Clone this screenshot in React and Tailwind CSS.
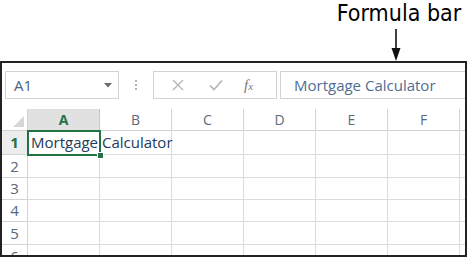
const COLS = ['A', 'B', 'C', 'D', 'E', 'F']
const ROWS = [1, 2, 3, 4, 5, 6]

// Cell value shown in A1 and in the formula bar
const VALUE = 'Mortgage Calculator'

function Corner() {
  return (
    <div className="relative border-r border-b border-[#d4d4d4] bg-white">
      <svg className="absolute right-[3px] bottom-[3px]" width="11" height="11" viewBox="0 0 11 11">
        <polygon points="11,0 11,11 0,11" fill="#d6d6d6" />
      </svg>
    </div>
  )
}

function ColHeader({ label }) {
  const active = label === 'A'
  return (
    <div
      className={
        'flex items-center justify-center border-r border-b text-[14px] ' +
        (active
          ? 'border-b-[#217346] border-r-[#c6c6c6] bg-[#e1e1e1] font-bold text-[#217346]'
          : 'border-[#d4d4d4] bg-white text-[#5c6b7c]')
      }
    >
      {label}
    </div>
  )
}

function RowHeader({ n }) {
  const active = n === 1
  return (
    <div
      className={
        'flex items-center justify-center border-r border-b text-[15px] ' +
        (active
          ? 'border-r-[#217346] border-b-[#d4d4d4] bg-[#ededed] font-bold text-[#217346]'
          : 'border-[#d4d4d4] bg-white text-[#55687e]')
      }
    >
      {n}
    </div>
  )
}

export default function App() {
  return (
    <div className="h-[257px] w-[468px] overflow-hidden bg-white font-['Liberation_Sans',Arial,sans-serif]">
      {/* label + arrow */}
      <div className="flex h-[61px] pl-[337px]">
        <div className="flex w-[124px] flex-col items-center pt-[1px]">
          <span className="whitespace-nowrap font-['DejaVu_Sans_Condensed','DejaVu_Sans',sans-serif] text-[23px] leading-[25px] font-stretch-condensed text-black">
            Formula bar
          </span>
          <svg className="mr-[6px] mt-[3px]" width="10" height="32" viewBox="0 0 10 32">
            <line x1="5" y1="0" x2="5" y2="22" stroke="#111" strokeWidth="1.6" />
            <polygon points="0.5,19 9.5,19 5,32" fill="#111" />
          </svg>
        </div>
      </div>

      {/* screenshot frame */}
      <div className="h-[196px] w-[467px] overflow-hidden border-2 border-[#232323] bg-white font-['Open_Sans',Lato,sans-serif]">
        {/* toolbar */}
        <div className="flex items-center pt-[8px]">
          <div className="ml-[3px] flex h-[28px] w-[114px] items-center justify-between border border-[#d3d3d3] pl-[8px] pr-[6px]">
            <span className="text-[15px] text-[#4d6280]">A1</span>
            <svg width="8" height="5" viewBox="0 0 8 5">
              <polygon points="0,0 8,0 4,4.5" fill="#6b6b6b" />
            </svg>
          </div>
          <div className="flex w-[34px] justify-center">
            <svg width="4" height="12" viewBox="0 0 4 12">
              <circle cx="2" cy="2" r="1" fill="#9a9a9a" />
              <circle cx="2" cy="6" r="1" fill="#9a9a9a" />
              <circle cx="2" cy="10" r="1" fill="#9a9a9a" />
            </svg>
          </div>
          <div className="flex h-[28px] w-[124px] items-center border border-[#d3d3d3]">
            <svg className="ml-[18px]" width="12" height="12" viewBox="0 0 12 12">
              <path d="M1 1 L11 11 M11 1 L1 11" stroke="#b4b4b4" strokeWidth="1.4" />
            </svg>
            <svg className="ml-[25px]" width="14" height="12" viewBox="0 0 14 12">
              <path d="M1 6.5 L5 10.5 L13 1.5" stroke="#b4b4b4" strokeWidth="1.6" fill="none" />
            </svg>
            <span className="ml-[21px] font-['Liberation_Serif',serif] text-[15px] italic text-[#7a7a7a]">
              f<span className="text-[11px]">x</span>
            </span>
          </div>
          <div className="ml-[3px] -mr-px flex h-[28px] flex-1 items-center border border-[#d3d3d3] pl-[13px]">
            <span className="text-[15px] text-[#4f6d92]">{VALUE}</span>
          </div>
        </div>

        {/* sheet grid */}
        <div className="mt-[10px] grid grid-cols-[26px_repeat(6,72px)_1fr] grid-rows-[22px_24px_23px_22px_22px_23px_23px]">
          <Corner />
          {COLS.map((c) => (
            <ColHeader key={c} label={c} />
          ))}
          <div className="border-b border-[#d4d4d4] bg-white" />

          {ROWS.map((r) => (
            <div key={r} className="contents">
              <RowHeader n={r} />
              {COLS.map((c) => (
                <div key={c} className="relative border-r border-b border-[#dcdcdc]">
                  {r === 1 && c === 'A' && (
                    <>
                      <div className="absolute -top-px -left-px h-[26px] w-[74px] border-2 border-[#217346]" />
                      <div className="absolute right-[-5px] bottom-[-5px] z-20 h-[7px] w-[7px] border border-white bg-[#217346]" />
                      <span className="absolute bottom-[1px] left-[3px] z-10 whitespace-nowrap text-[15px] text-[#233a5c]">
                        {VALUE}
                      </span>
                    </>
                  )}
                </div>
              ))}
              <div className="border-b border-[#dcdcdc]" />
            </div>
          ))}
        </div>
      </div>
    </div>
  )
}
